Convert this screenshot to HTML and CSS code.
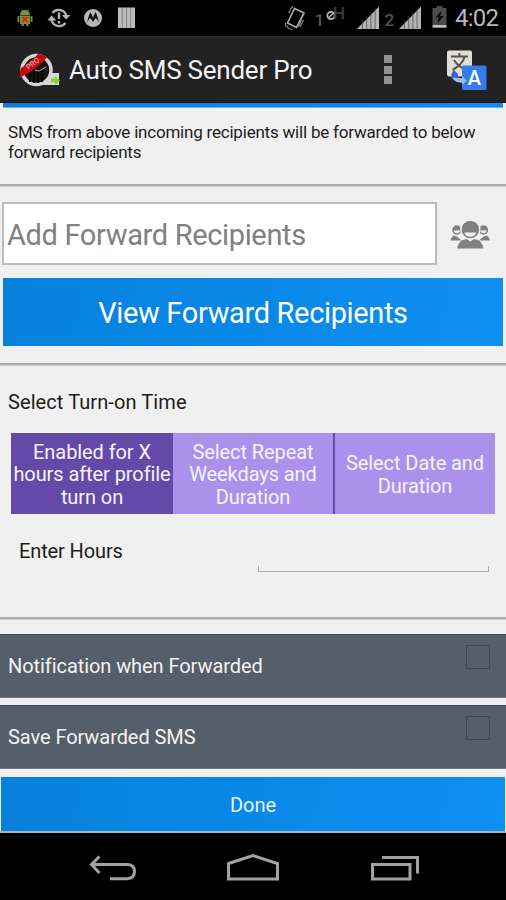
FILE: index.html
```html
<!DOCTYPE html>
<html lang="en">
<head>
<meta charset="utf-8">
<title>Auto SMS Sender Pro</title>
<link rel="stylesheet" href="styles.css">
</head>
<body>
<div class="phone">
  <div class="status">
    <svg class="status-left" width="140" height="36" viewBox="0 0 140 36">
      <g fill="#78913d">
        <path d="M20 15.500q0-5.500 5-5.500t5 5.500z"/>
        <path d="M20 16h10v8H20zM17.500 16h1.800v6h-1.800zM30.700 16h1.800v6h-1.800zM21.500 23h2.300v3h-2.300zM26.200 23h2.300v3h-2.300z"/>
        <path d="M21.500 9.500l1.500 2M28.500 9.500l-1.500 2" stroke="#78913d" fill="none"/>
      </g>
      <path d="M22.500 17l5 5M27.500 17l-5 5" stroke="#e02018" stroke-width="1.800"/>
      <g fill="none" stroke="#b4b4b4" stroke-width="2.200">
        <path d="M52.500 13a8 8 0 0 1 14 3M65.500 23a8 8 0 0 1-14-3"/>
        <path d="M59 12.500v6.500M59 21v2.500" stroke-width="2.400"/>
      </g>
      <path d="M62 15h8.500l-4.500 4.500zM47.500 20.500l4-5 5 5z" fill="#b4b4b4"/>
      <circle cx="93" cy="18" r="9" fill="#b8b8b8"/>
      <path d="M87 23q1-6 3.300-11 1.700 2.500 2.700 6 1-3.500 2.700-6 2.300 5 3.300 11-1.500-3.500-3.200-5-1.500 1.500-2.800 4-1.300-2.500-2.800-4-1.700 1.500-3.200 5z" fill="#111"/>
      <path d="M118 7.500h17v20.500h-17z" fill="#bcbcbc"/>
      <path d="M122.300 8v20M126.500 8v20M130.700 8v20" stroke="#777" stroke-width=".8"/>
    </svg>
    <svg class="status-right" width="222" height="36" viewBox="284 0 222 36">
      <path d="M294.500 8.500l9.500 4.500-7.500 14.500-9-4.500z" fill="none" stroke="#aaa" stroke-width="1.700" stroke-linejoin="round"/>
      <path d="M290 9.500l3-3M288.500 13l2-3M303.500 20l-3.500 7M301.500 20l-3 6.500M285.500 23v2.500l3 2M287.500 28l4.500 1.500" stroke="#888" fill="none" stroke-width="1.200"/>
      <text class="sim" x="314.500" y="26">1</text>
      <circle cx="331" cy="15.500" r="3.600" fill="none" stroke="#bbb" stroke-width="1.700"/>
      <path d="M328.500 17.800l5-4.600" stroke="#bbb" stroke-width="1.400"/>
      <text class="net" x="333" y="19">H</text>
      <path d="M357 29l22-22.500v22.500z" fill="#b4b4b4"/>
      <path d="M362.500 20v9M366.700 16v13M370.900 12v17M375.100 8v21" stroke="#444" stroke-width=".7"/>
      <text class="sim" x="384.500" y="26">2</text>
      <path d="M399 29l22-22.500v22.500z" fill="#b4b4b4"/>
      <path d="M404.500 20v9M408.700 16v13M412.900 12v17M417.100 8v21" stroke="#444" stroke-width=".7"/>
      <path d="M436.500 6h6v2h4v17h-14V8h4z" fill="#4b4b4b"/>
      <path d="M432.500 25h14v2.700h-14z" fill="#c0c0c0"/>
      <path d="M441.500 10.500l-6 7h3l-1 6 6-7.500h-3.300z" fill="#0a0a0a"/>
      <text class="clock" x="455" y="26">4:02</text>
    </svg>
  </div>

  <header class="appbar">
    <svg class="logo" width="42" height="38" viewBox="19 50 42 38">
      <path d="M40 72h19v12H35z" fill="#d8d8d8"/>
      <circle cx="36.500" cy="69" r="14.500" fill="#171717" stroke="#d5d5d5" stroke-width="3.500"/>
      <path d="M30 72v9M34 71v11M38 70v12M42 70v11" stroke="#050505" stroke-width="2.200"/>
      <path d="M35 69l4 1 7-4" stroke="#aaa" fill="none" stroke-width="1"/>
      <path d="M20 76q-1-4 1-9Q32 60 38 53q5 0 9 3.500Q36 69 21 76z" fill="#c50b0b"/>
      <text class="pro" transform="translate(28.500 69) rotate(-37)">PRO</text>
      <path d="M51 77.500h4V75l5 4.500-5 4.500v-2.500h-4z" fill="#8bd32c"/>
    </svg>
    <h1>Auto SMS Sender Pro</h1>
    <div class="overflow"><i></i><i></i><i></i></div>
    <svg class="translate" width="42" height="42" viewBox="446 48 42 42">
      <rect x="447" y="49.500" width="25" height="26" rx="2" fill="#e0ddd2"/>
      <path d="M451 55.500h17M459.500 52v3.500M464.500 56q-2 7.500-12 13M454 59q4 6.500 12 10" fill="none" stroke="#555" stroke-width="2"/>
      <path d="M451.500 73q.5 8.500 9 8.500h2v3l5-5-5-4.500v2.500q-5 0-6-3z" fill="#9fbff2"/>
      <path d="M454 69l4 4v4.500l-3.500-1-3 1.500v-5.500z" fill="#2e69d4"/>
      <rect x="462" y="64.500" width="24.500" height="24.500" rx="1.500" fill="#367bea"/>
      <path d="M460 77.500h2.500v-2.500l4 4.500-4 4.500v-2.500h-2.500z" fill="#9fbff2"/>
      <text class="ta" x="474.300" y="83.500" text-anchor="middle">A</text>
    </svg>
  </header>

  <main>
    <div class="strip"></div>
    <p class="note"><span>SMS from above incoming recipients will be forwarded to below</span><br><span>forward recipients</span></p>
    <hr>
    <div class="recipients">
      <div class="field"><span>Add Forward Recipients</span></div>
      <svg width="42" height="30" viewBox="450 221 42 30" fill="#808080">
        <circle cx="457" cy="232" r="4.700"/><circle cx="483.500" cy="232" r="4.700"/>
        <path d="M453.500 232.500h7q-1 2.700-3.500 2.700t-3.500-2.700zM480 232.500h7q-1 2.700-3.500 2.700t-3.500-2.700z" fill="#eee"/>
        <path d="M450.500 242.500q1-4.500 4-5l3 1.500 4 3.500zM490 242.500q-1-4.500-4-5l-3 1.500-4 3.500z"/>
        <circle cx="470.300" cy="231.500" r="9.500" stroke="#f0f0f0" stroke-width="1.500"/>
        <path d="M464.300 234.500h12q-1.500 4.300-6 4.300t-6-4.300z" fill="#f0f0f0"/>
        <path d="M457 250.500q1.500-7 6-8.500l3.500-1 3.800 2.500 3.800-2.500 3.500 1q4.500 1.500 6 8.500z"/>
      </svg>
    </div>
    <div class="view"><span>View Forward Recipients</span></div>
    <hr>
    <div class="label"><span>Select Turn-on Time</span></div>
    <div class="tabs">
      <div class="tab on">Enabled for X<br>hours after profile<br>turn on</div>
      <div class="tab">Select Repeat<br>Weekdays and<br>Duration</div>
      <div class="tab last">Select Date and<br>Duration</div>
    </div>
    <div class="hours"><span>Enter Hours</span><div class="line"></div></div>
    <hr>
    <div class="row first"><span>Notification when Forwarded</span><i></i></div>
    <div class="row"><span>Save Forwarded SMS</span><i></i></div>
    <div class="done"><span>Done</span></div>
  </main>

  <nav>
    <svg width="506" height="67" viewBox="0 833 506 67" fill="none" stroke="#a2a2a2" stroke-width="3">
      <path d="M91 864.500h36q7.500 0 7.500 7t-7.500 7.300h-17M99.500 856.500l-8 8 8 8.500"/>
      <path d="M228.500 863.500l24.500-8 24.500 8v15.500h-49z"/>
      <path d="M372.500 864.500h37.500v14.500h-37.500zM382 857.500h35.500v16"/>
    </svg>
  </nav>
</div>
</body>
</html>
```

FILE: styles.css
```css
* { box-sizing: border-box; }
body { margin: 0; background: #000; font-family: Roboto, "Liberation Sans", sans-serif; }
svg { display: block; flex: none; }
.phone { width: 506px; height: 900px; display: flex; flex-direction: column; overflow: hidden; }
.status { height: 36px; background: #000; display: flex; justify-content: space-between; }
.sim { font-size: 17px; font-weight: 500; fill: #555; }
.net { font-size: 17px; font-weight: 500; fill: #3c3c3c; }
.clock { font-size: 24px; fill: #b8b8b8; letter-spacing: -0.8px; }
.appbar { height: 67px; background: #222; border-top: 1px solid #303030; border-bottom: 1px solid #111; display: flex; align-items: center; padding-left: 19px; }
.appbar h1 { margin: 0 0 0 8px; width: 315px; font-size: 26px; font-weight: 400; letter-spacing: -0.24px; color: #f3f3f3; white-space: nowrap; }
.pro { font-size: 7.5px; fill: #f0caca; }
.ta { font-size: 20px; font-weight: 500; fill: #fff; }
.overflow { width: 8px; margin-right: 54px; display: grid; gap: 2.5px; }
.overflow i { height: 8px; background: #929292; }
main { height: 730px; background: #f0f0f0; color: #1c1c1c; border-bottom: 2px solid #aeb4ba; white-space: nowrap; }
.strip { height: 5px; margin: 0 3px; background: linear-gradient(90deg, #0780dc, #0d8df0); border-bottom: 1px solid #68b3f2; }
.note { margin: 0; padding: 14px 8px 0; height: 76px; font-size: 17px; line-height: 20px; letter-spacing: -0.21px; }
hr { margin: 0; border: 0; height: 3px; background: #adadad; border-bottom: 1px solid #cecece; }
.recipients { height: 63px; margin-top: 15px; display: flex; align-items: center; padding-left: 2px; }
.field { width: 435px; height: 63px; background: #fff; border: 2px solid #bbb; padding-left: 3px; font-size: 29px; line-height: 62px; letter-spacing: -0.35px; color: #808080; margin-right: 13px; }
.view { height: 68px; margin: 13px 3px 17px; background: linear-gradient(100deg, #0680dc, #0e90f2); color: #fff; text-align: center; font-size: 29px; line-height: 70px; letter-spacing: -0.35px; }
.label { height: 67px; padding-left: 8px; font-size: 20px; line-height: 72px; letter-spacing: 0.09px; }
.tabs { display: grid; grid-template-columns: 162px 160px 162px; height: 81px; margin: 0 11px; }
.tab { background: #ab91ec; color: #f7f3ff; display: flex; align-items: center; justify-content: center; text-align: center; padding-top: 2px; font-size: 20px; line-height: 22.5px; letter-spacing: -0.08px; }
.tab.on { background: #6549a8; }
.tab.last { border-left: 2px solid #6549a8; }
.hours { height: 103px; padding: 0 17px 0 19px; display: flex; justify-content: space-between; font-size: 20px; line-height: 75px; letter-spacing: -0.12px; }
.line { width: 231px; height: 6px; margin-top: 52px; border: 1px solid #aaa; border-top: 0; }
.row { height: 64px; background: #545f6a; border-top: 1px solid #3d4d58; border-bottom: 1px solid #6d7982; display: flex; justify-content: space-between; padding: 0 16px 0 8px; margin-top: 7px; font-size: 20px; line-height: 62px; letter-spacing: -0.07px; color: #f2f2f2; }
.row.first { margin-top: 14px; }
.row i { width: 24px; height: 24px; margin-top: 10px; border: 1.5px solid #40484f; }
.done { height: 54px; margin: 8px 1px 0; background: linear-gradient(100deg, #0680dc, #0e90f2); color: #e8f4ff; font-size: 20px; line-height: 56px; text-align: center; }
nav { height: 67px; background: #000; }
```
